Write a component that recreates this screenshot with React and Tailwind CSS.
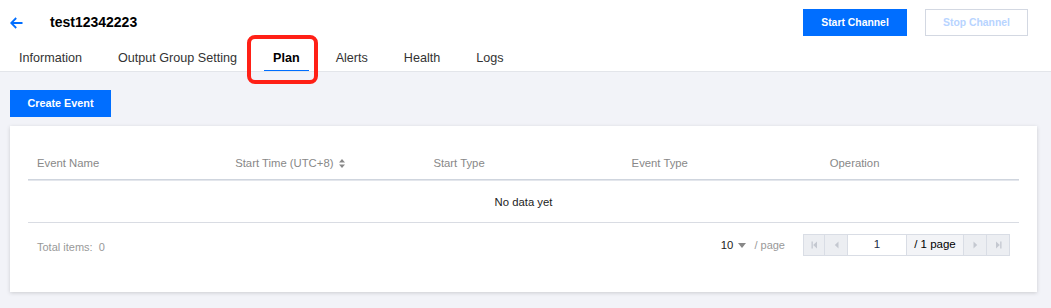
import { useState } from 'react';

const tabs = ['Information', 'Output Group Setting', 'Plan', 'Alerts', 'Health', 'Logs'];
const columns = ['Event Name', 'Start Time (UTC+8)', 'Start Type', 'Event Type', 'Operation'];

const SortIcon = () => (
  <svg width="6" height="9" viewBox="0 0 6 9" className="ml-[6px]">
    <path d="M3 0 L6 3.5 H0 Z" fill="#888" />
    <path d="M3 9 L6 5.5 H0 Z" fill="#888" />
  </svg>
);

const PageIcon = ({ type }) => (
  <svg width="7" height="8" viewBox="0 0 7 8">
    {type === 'first' && (
      <>
        <rect x="0.5" y="0.5" width="1.3" height="7" fill="#c4c8d0" />
        <path d="M6 0.5 V7.5 L2.2 4 Z" fill="#c4c8d0" />
      </>
    )}
    {type === 'prev' && <path d="M5.5 0.5 V7.5 L1.8 4 Z" fill="#c4c8d0" />}
    {type === 'next' && <path d="M1.5 0.5 V7.5 L5.2 4 Z" fill="#c4c8d0" />}
    {type === 'last' && (
      <>
        <path d="M1 0.5 V7.5 L4.8 4 Z" fill="#c4c8d0" />
        <rect x="5.2" y="0.5" width="1.3" height="7" fill="#c4c8d0" />
      </>
    )}
  </svg>
);

export default function App() {
  const [active, setActive] = useState('Plan');

  return (
    <div className="relative w-[1051px] h-[308px] overflow-hidden bg-[#f2f3f8] font-['Liberation_Sans',Arial,sans-serif]">
      {/* Header */}
      <div className="bg-white border-b border-[#e3e5ea]">
        <div className="flex items-center justify-between pl-[10px] pr-[23px] pt-[9px]">
          <div className="flex items-center">
            <svg width="13" height="12" viewBox="0 0 13 12" fill="none">
              <path d="M12.5 6 H1.5 M6.2 1 L1.2 6 L6.2 11" stroke="#006eff" strokeWidth="1.8" />
            </svg>
            <span className="ml-[27px] text-[14px] font-bold text-black">test12342223</span>
          </div>
          <div className="flex gap-[18px]">
            <button className="w-[104px] h-[27px] bg-[#006eff] text-white text-[10.4px] font-bold">
              Start Channel
            </button>
            <button
              disabled
              className="w-[103px] h-[27px] bg-white border border-[#d3d8e2] text-[#b8d4ff] text-[10.4px] font-bold"
            >
              Stop Channel
            </button>
          </div>
        </div>

        {/* Tabs */}
        <div className="flex gap-[18px] pl-[10px] mt-[9px]">
          {tabs.map((tab) => (
            <button
              key={tab}
              onClick={() => setActive(tab)}
              className={`h-[26px] px-[9px] pt-[2px] text-[12.6px] border-b-[1.5px] ${
                active === tab
                  ? 'font-bold text-black border-[#006eff]'
                  : 'text-[#333] border-transparent'
              }`}
            >
              {tab}
            </button>
          ))}
        </div>
      </div>

      {/* Annotation around the Plan tab */}
      <div className="absolute left-[247px] top-[35px] w-[71px] h-[49px] border-[4px] border-[#ff2016] rounded-[8px] pointer-events-none" />

      {/* Content */}
      <div className="pl-[10px] pr-[14px] pt-[18px]">
        <button className="w-[101px] h-[27px] bg-[#006eff] text-white text-[10.8px] font-bold">
          Create Event
        </button>

        <div className="mt-[9px] bg-white shadow-[0_1px_4px_rgba(0,0,0,0.16)] px-[18px] pt-[18px] pb-[36px]">
          <div className="grid grid-cols-5 h-[36px] items-center pt-[3px] border-b border-[#cfd5de]">
            {columns.map((col, i) => (
              <div key={col} className="flex items-center pl-[9px] text-[11.3px] text-[#888]">
                {col}
                {i === 1 && <SortIcon />}
              </div>
            ))}
          </div>
          <div className="h-[43px] pt-[2px] flex items-center justify-center border-t border-[#e3e6ec] border-b border-b-[#d9dce3] text-[11.3px] text-[#222]">
            No data yet
          </div>

          <div className="flex items-center justify-between pt-[11px] pl-[9px] pr-[9px]">
            <span className="pt-[4px] text-[11px] text-[#999]">Total items:&nbsp; 0</span>
            <div className="flex items-center">
              <span className="text-[11.3px] text-[#222]">10</span>
              <svg width="8" height="5" viewBox="0 0 8 5" className="ml-[5px]">
                <path d="M0 0 H8 L4 5 Z" fill="#888" />
              </svg>
              <span className="ml-[8px] text-[11px] text-[#999]">/ page</span>
              <div className="ml-[18px] flex h-[22px] border border-[#d9dde5]">
                <div className="w-[21px] flex items-center justify-center bg-[#eceef2] border-r border-[#d9dde5]">
                  <PageIcon type="first" />
                </div>
                <div className="w-[23px] flex items-center justify-center bg-[#eceef2] border-r border-[#d9dde5]">
                  <PageIcon type="prev" />
                </div>
                <div className="w-[59px] flex items-center justify-center bg-white text-[11.5px] text-[#1a2a44] border-r border-[#d9dde5]">
                  1
                </div>
                <div className="w-[57px] flex items-center justify-center bg-[#f3f4f7] text-[11.5px] text-black border-r border-[#d9dde5]">
                  / 1 page
                </div>
                <div className="w-[23px] flex items-center justify-center bg-[#eceef2] border-r border-[#d9dde5]">
                  <PageIcon type="next" />
                </div>
                <div className="w-[22px] flex items-center justify-center bg-[#eceef2]">
                  <PageIcon type="last" />
                </div>
              </div>
            </div>
          </div>
        </div>
      </div>
    </div>
  );
}
